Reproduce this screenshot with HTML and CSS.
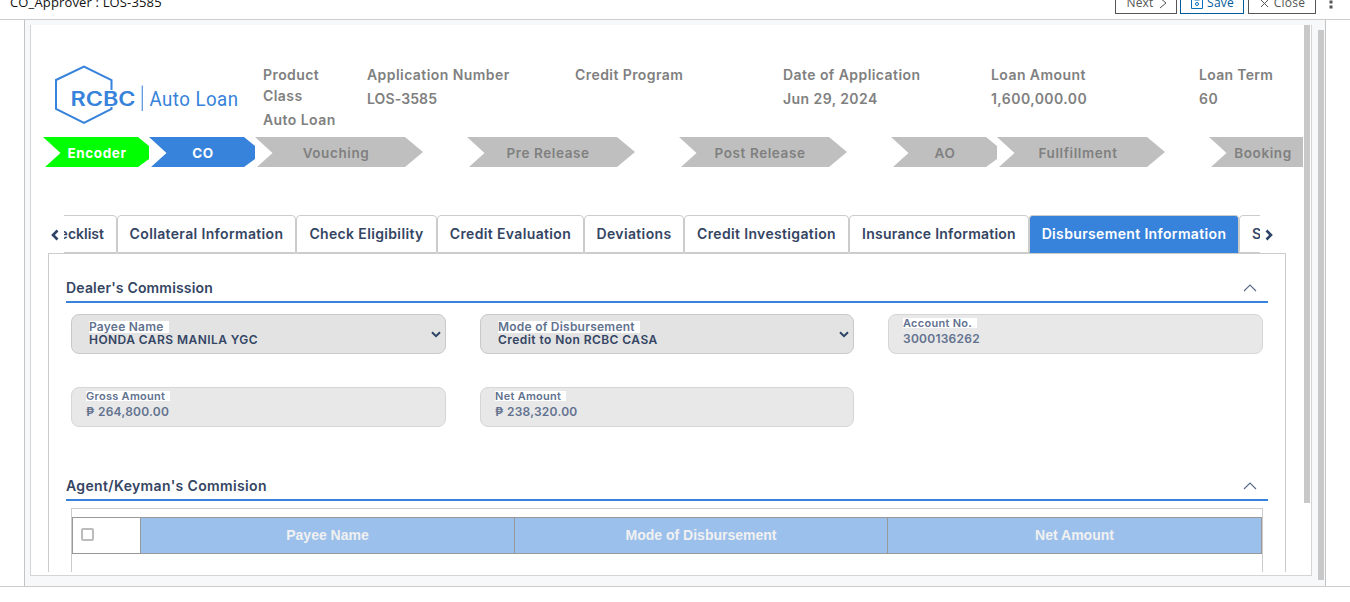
FILE: index.html
```html
<!DOCTYPE html>
<html lang="en">
<head>
<meta charset="utf-8">
<title>CO_Approver : LOS-3585</title>
<link rel="stylesheet" href="styles.css">
</head>
<body>
<header class="topbar">
  <div class="title">CO_Approver : LOS-3585</div>
  <div class="actions">
    <button class="btn next">Next <svg width="8" height="12" viewBox="0 0 8 12"><path d="M1 1l6 5-6 5"/></svg></button>
    <button class="btn save"><svg width="12" height="12" viewBox="0 0 12 12"><path d="M.5 .5h11v11H.5zM3.500 .5v2.500h5V.5"/><circle cx="6" cy="7" r="1.500"/></svg>Save</button>
    <button class="btn close"><svg width="9" height="9" viewBox="0 0 9 9"><path d="M1 1l7 7M8 1L1 8"/></svg>Close</button>
    <svg class="dots" width="4" height="14" viewBox="0 0 4 14"><path d="M.5 .500h3v3h-3zM.5 5.500h3v3h-3zM.5 10.500h3v3h-3z"/></svg>
  </div>
</header>
<main class="frame">
  <section class="sheet">
    <div class="content">
      <div class="summary">
        <svg class="logo" width="189" height="61" viewBox="0 0 189 61">
          <path class="hex" d="M57.500 26V16L30 2.500 2 16V45L30 59 57.500 45V43"/>
          <text class="brand" x="16.500" y="42" textLength="65" lengthAdjust="spacingAndGlyphs">RCBC</text>
          <path class="bar" d="M88.300 21.500V47"/>
          <text class="product" x="95.500" y="42" textLength="89" lengthAdjust="spacingAndGlyphs">Auto Loan</text>
        </svg>
        <dl class="facts">
          <div><dt>Product Class</dt><dd>Auto Loan</dd></div>
          <div><dt>Application Number</dt><dd>LOS-3585</dd></div>
          <div><dt>Credit Program</dt><dd></dd></div>
          <div><dt>Date of Application</dt><dd>Jun 29, 2024</dd></div>
          <div><dt>Loan Amount</dt><dd>1,600,000.00</dd></div>
          <div><dt>Loan Term</dt><dd>60</dd></div>
        </dl>
      </div>
      <ol class="steps">
        <li class="short done">Encoder</li>
        <li class="short current">CO</li>
        <li class="long">Vouching</li>
        <li class="long">Pre Release</li>
        <li class="long">Post Release</li>
        <li class="short">AO</li>
        <li class="long">Fullfillment</li>
        <li class="short">Booking</li>
      </ol>
      <nav class="tabbar">
        <svg class="arrow" width="10" height="12" viewBox="0 0 10 12"><path d="M7.500 1.500L3 6l4.500 4.500"/></svg>
        <div class="tabs">
          <a class="tab t-check">Checklist</a>
          <a class="tab t-coll">Collateral Information</a>
          <a class="tab t-elig">Check Eligibility</a>
          <a class="tab t-eval">Credit Evaluation</a>
          <a class="tab t-dev">Deviations</a>
          <a class="tab t-inv">Credit Investigation</a>
          <a class="tab t-ins">Insurance Information</a>
          <a class="tab t-disb active">Disbursement Information</a>
          <a class="tab t-last">S</a>
        </div>
        <svg class="arrow" width="10" height="12" viewBox="0 0 10 12"><path d="M2.500 1.500L7 6l-4.500 4.500"/></svg>
      </nav>
      <div class="panel">
        <h2>Dealer's Commission <svg width="14" height="8" viewBox="0 0 14 8"><path d="M1 7l6-6 6 6"/></svg></h2>
        <div class="fields">
          <div class="field select"><label>Payee Name</label><span>HONDA CARS MANILA YGC</span><svg width="10" height="7" viewBox="0 0 10 7"><path d="M1 1.200l4 4 4-4"/></svg></div>
          <div class="field select"><label>Mode of Disbursement</label><span>Credit to Non RCBC CASA</span><svg width="10" height="7" viewBox="0 0 10 7"><path d="M1 1.200l4 4 4-4"/></svg></div>
          <div class="field"><label>Account No.</label><span>3000136262</span></div>
          <div class="field"><label>Gross Amount</label><span>₱ 264,800.00</span></div>
          <div class="field"><label>Net Amount</label><span>₱ 238,320.00</span></div>
        </div>
        <h2 class="agent">Agent/Keyman's Commision <svg width="14" height="8" viewBox="0 0 14 8"><path d="M1 7l6-6 6 6"/></svg></h2>
        <div class="gridbox">
          <div class="grid">
            <div class="pick"><i class="box"></i></div>
            <div>Payee Name</div>
            <div>Mode of Disbursement</div>
            <div>Net Amount</div>
          </div>
        </div>
      </div>
    </div>
    <div class="thumb inner"></div>
  </section>
  <div class="thumb outer"></div>
</main>
</body>
</html>
```
FILE: styles.css
```css
* { box-sizing: border-box; }
body {
  margin: 0;
  height: 602px;
  overflow: hidden;
  background: #fff;
  font-family: Inter, "Open Sans", sans-serif;
  color: #344563;
}
svg { fill: none; flex: none; }

.topbar {
  height: 20px;
  border-bottom: 1px solid #ccc;
  display: flex;
  align-items: flex-end;
  justify-content: space-between;
  overflow: hidden;
  padding: 0 17px 5px 10px;
  font-family: "Open Sans", sans-serif;
}
.title { color: #111; font-size: 13px; line-height: 18px; margin-bottom: 3px; letter-spacing: .15px; white-space: nowrap; }
.actions { display: flex; align-items: flex-end; }
.btn {
  height: 22px;
  display: flex;
  align-items: center;
  justify-content: center;
  padding: 0 0 0 1px;
  margin: 0;
  border: 1px solid #555;
  background: #fff;
  color: #555;
  font: 12px/16px "Open Sans", sans-serif;
  letter-spacing: .2px;
}
.btn svg { stroke: #555; }
.next { width: 62px; gap: 5px; margin-right: 3px; }
.save { width: 64px; gap: 4px; margin-right: 4px; color: #005a9c; border-color: #005a9c; }
.save svg { stroke: #0a6ebd; }
.close { width: 68px; gap: 5px; margin-right: 13px; }
.dots { fill: #555; margin-bottom: 5px; }

.frame {
  display: flex;
  width: 1302px;
  height: 566px;
  margin-left: 24px;
  padding: 5px 0 10px 5px;
  background: #f7f8fa;
  border: solid #c4c4c4;
  border-width: 0 1px;
  box-shadow: 0 1px #ccc, -24px 1px #ccc, 24px 1px #ccc;
  clip-path: inset(0 -24px -1px -24px);
  position: relative;
}
.frame::before, .frame::after {
  content: "";
  position: absolute;
  top: 0;
  bottom: 0;
  width: 24px;
  background: #fff;
}
.frame::before { left: -25px; }
.frame::after { right: -25px; }
.sheet {
  display: flex;
  width: 1282px;
  height: 551px;
  background: #fff;
  border: 1px solid #d2d4d6;
  border-top: 0;
}
.content { width: 1272px; height: 547px; margin-right: 1px; overflow: hidden; flex: none; }
.thumb { width: 6px; background: #c8c8c8; flex: none; }
.inner { height: 478px; }
.outer { height: 550px; margin: 5px 0 0 6px; }

.summary { display: flex; height: 112px; padding: 39px 0 0 23px; }
.facts {
  display: grid;
  grid-template-columns: 104px repeat(5, 208px);
  flex: none;
  margin: 0 0 0 20px;
  color: #808080;
  font-size: 14px;
  font-weight: 600;
  line-height: 21px;
  letter-spacing: .43px;
}
.facts > div { padding-right: 30px; }
.facts dd { margin: 3px 0 0; white-space: nowrap; }
.facts dt { white-space: nowrap; }
.facts > div:first-child dt { white-space: normal; width: 70px; }
.facts > div:nth-child(2) dd { letter-spacing: .1px; }
.facts > div:last-child dt { letter-spacing: .3px; }
.hex { stroke: #3782da; stroke-width: 2; }
.bar { stroke: #5b99e0; stroke-width: 1.3; }
.logo text { fill: #3782da; }
.brand { font: 600 19.5px Inter, sans-serif; }
.product { font: 400 19.5px Roboto, sans-serif; letter-spacing: .5px; }

.steps {
  display: flex;
  width: 1260px;
  height: 30px;
  margin: 0 0 0 12px;
  padding: 0;
  overflow: hidden;
  list-style: none;
  font-size: 13.5px;
  font-weight: 600;
  line-height: 32px;
  letter-spacing: .6px;
  text-align: center;
  color: #808080;
}
.steps li { flex: none; background: #bfbfbf; }
.steps .short {
  width: 106px;
  padding-left: 2px;
  clip-path: polygon(0 0, 95px 0, 106px 9px, 106px 22px, 95px 30px, 2px 30px, 17.5px 16px);
}
.steps .long {
  width: 212px;
  padding: 0 50px 0 0;
  clip-path: polygon(0 0, 150px 0, 168px 15px, 150px 30px, 2px 30px, 17.5px 16px);
}
.steps .done { background: #0f0; color: #fff; font-weight: 700; }
.steps .current { background: #3782da; color: #fff; font-weight: 700; }

.tabbar { display: flex; align-items: flex-start; margin: 48px 0 0 19px; height: 38px; }
.arrow { stroke: #2c4366; stroke-width: 2.6; margin-top: 14px; }
.tabs { display: flex; width: 1196px; height: 38px; overflow: hidden; margin: 0 4px; }
.tab {
  flex: none;
  height: 38px;
  border: 1px solid #ccc;
  border-radius: 4px 4px 0 0;
  font-size: 14px;
  font-weight: 600;
  line-height: 36px;
  letter-spacing: .35px;
  text-align: center;
  white-space: nowrap;
}
.t-check { width: 93px; margin-left: -40px; text-align: right; padding-right: 12px; letter-spacing: 0; }
.t-coll { width: 179px; }
.t-elig { width: 141px; }
.t-eval { width: 147px; }
.t-dev { width: 100px; }
.t-inv { width: 165px; }
.t-ins { width: 180px; letter-spacing: .24px; }
.t-disb { width: 210px; }
.t-last { width: 100px; text-align: left; padding-left: 12px; }
.tab.active { background: #3782da; color: #fff; border-bottom-color: #3782da; }

.panel { width: 1238px; height: 340px; margin-left: 17px; padding: 17px; border: 1px solid #ccc; }
h2 {
  display: flex;
  align-items: center;
  justify-content: space-between;
  height: 32px;
  margin: 0;
  padding: 3px 11px 0 0;
  border-bottom: 2px solid #3782da;
  font-size: 14px;
  font-weight: 600;
  letter-spacing: .18px;
}
h2.agent { letter-spacing: .36px; }
h2 svg { stroke: #566a88; stroke-width: 1.1; }
.fields {
  display: grid;
  grid-template-columns: 375px 374px 375px;
  grid-auto-rows: 40px;
  gap: 33px 34px;
  padding: 11px 5px 42px;
}
.field {
  position: relative;
  display: flex;
  flex-direction: column;
  align-items: flex-start;
  padding: 3px 14px 0;
  background: #e8e8e8;
  border: 1px solid #d6d6d6;
  border-radius: 8px;
  color: #62728f;
  font-size: 12px;
  font-weight: 600;
  line-height: 14px;
}
.field label { height: 10px; padding-right: 5px; background: #fff; font-size: 11px; line-height: 10px; letter-spacing: .28px; }
.field span { margin-top: 4px; letter-spacing: .25px; }
.field.select { padding: 6px 17px 0; background: #e3e3e3; border-color: #c9c9c9; }
.select label { height: 12px; font-size: 12px; line-height: 12px; letter-spacing: .23px; }
.select span { margin-top: 0; color: #344563; letter-spacing: .44px; }
.select svg { position: absolute; right: 4px; top: 16px; stroke: #2c4366; stroke-width: 2; }
.gridbox { margin: 7px 5px 0; height: 100px; padding-top: 8px; border: 1px solid #ccc; }
.grid {
  display: grid;
  grid-template-columns: 67px 374px 373px 374px;
  height: 37px;
  border: 1px solid #999;
  font: bold 14px/35px "Liberation Sans", Arial, sans-serif;
  text-align: center;
  color: #f1f1f1;
}
.grid > div { background: #9cc0ec; border-left: 1px solid #999; }
.grid > .pick { display: flex; align-items: center; background: #fff; border: 0; padding: 0 0 2px 8px; }
.box { width: 13px; height: 13px; border: 2px solid #bcbcbc; border-radius: 2px; }
```
